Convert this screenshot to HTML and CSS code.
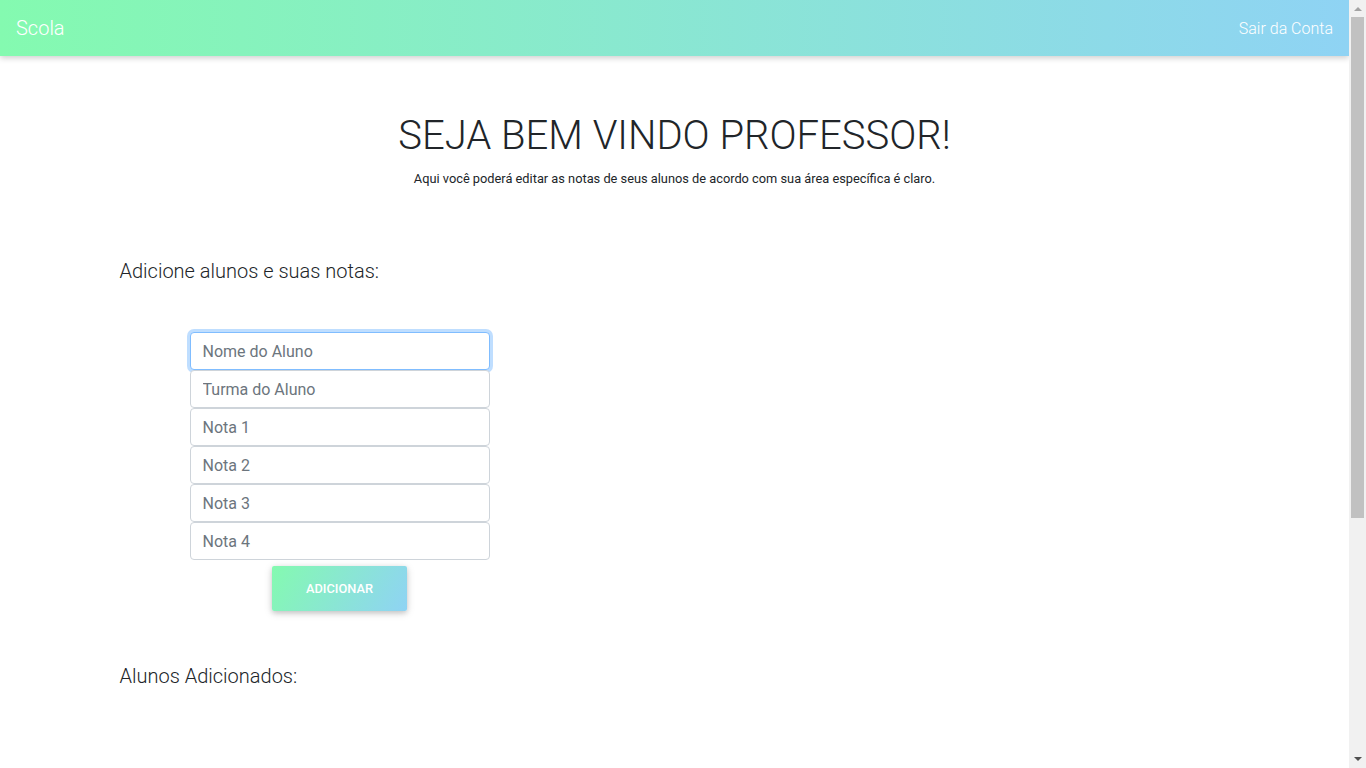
FILE: index.html
```html
<!DOCTYPE html>
<html lang="pt-BR">
<head>
<meta charset="utf-8">
<title>Scola</title>
<link rel="stylesheet" href="styles.css">
</head>
<body>
<nav class="navbar">
  <span class="brand">Scola</span>
  <a class="logout" href="#">Sair da Conta</a>
</nav>
<main class="container">
  <header class="hero">
    <h1 class="hero-title">SEJA BEM VINDO PROFESSOR!</h1>
    <p class="hero-sub">Aqui você poderá editar as notas de seus alunos de acordo com sua área específica é claro.</p>
  </header>
  <section class="add">
    <h2 class="section-title">Adicione alunos e suas notas:</h2>
    <form class="form">
      <input class="field focused" type="text" placeholder="Nome do Aluno">
      <input class="field" type="text" placeholder="Turma do Aluno">
      <input class="field" type="text" placeholder="Nota 1">
      <input class="field" type="text" placeholder="Nota 2">
      <input class="field" type="text" placeholder="Nota 3">
      <input class="field" type="text" placeholder="Nota 4">
      <button class="btn" type="button">ADICIONAR</button>
    </form>
  </section>
  <section class="list">
    <h2 class="section-title">Alunos Adicionados:</h2>
  </section>
</main>
<div class="scrollbar" aria-hidden="true">
  <span class="sb-arrow sb-up"></span>
  <span class="sb-thumb"></span>
  <span class="sb-arrow sb-down"></span>
</div>
</body>
</html>
```

FILE: styles.css
```css
* { box-sizing: border-box; }
html, body { margin: 0; padding: 0; }
html { scrollbar-width: none; }
body {
  font-family: Roboto, "Liberation Sans", sans-serif;
  color: #212529;
  background: #fff;
  min-height: 1113px;
  padding-right: 17px;
}
.navbar {
  height: 56px;
  display: flex;
  align-items: center;
  justify-content: space-between;
  padding: 0 16px;
  background: linear-gradient(90deg, #84fab0 0%, #8fd3f4 100%);
  box-shadow: 0 2px 6px rgba(0,0,0,0.2);
}
.brand {
  color: #fff;
  font-size: 20px;
  font-weight: 300;
}
.logout {
  color: #fff;
  font-size: 16px;
  font-weight: 300;
  text-decoration: none;
}
.container {
  max-width: 1140px;
  margin: 0 auto;
  padding: 0 15px;
}
.hero {
  text-align: center;
  padding-top: 56px;
}
.hero-title {
  margin: 0;
  font-size: 40px;
  font-weight: 300;
  line-height: 1.2;
}
.hero-sub {
  margin: 9px 0 0;
  font-size: 12.8px;
  line-height: 1.5;
}
.add { padding-top: 71px; }
.section-title {
  margin: 0;
  font-size: 20px;
  font-weight: 300;
  line-height: 1.2;
}
.form {
  width: 300px;
  margin: 49px 0 0 70px;
  display: flex;
  flex-direction: column;
  align-items: center;
}
.field {
  width: 100%;
  height: 38px;
  padding: 6px 12px;
  font-family: inherit;
  font-size: 16px;
  color: #495057;
  border: 1px solid #ced4da;
  border-radius: 4px;
  background: #fff;
  outline: none;
}
.field::placeholder { color: #6c757d; }
.field.focused {
  border-color: #80bdff;
  box-shadow: 0 0 0 3px rgba(0,123,255,0.25);
}
.btn {
  margin-top: 6px;
  width: 135px;
  height: 45px;
  border: 0;
  border-radius: 2px;
  background: linear-gradient(120deg, #84fab0 0%, #8fd3f4 100%);
  color: #fff;
  font-family: inherit;
  font-size: 12.8px;
  font-weight: 500;
  box-shadow: 0 2px 5px rgba(0,0,0,0.16), 0 2px 10px rgba(0,0,0,0.12);
}
.list { padding-top: 53px; }

.scrollbar {
  position: fixed;
  top: 0;
  right: 0;
  width: 17px;
  height: 100vh;
  background: #f1f1f1;
  display: flex;
  flex-direction: column;
  align-items: center;
}
.sb-arrow {
  width: 0;
  height: 0;
  border-left: 4px solid transparent;
  border-right: 4px solid transparent;
}
.sb-up {
  margin-top: 7px;
  border-bottom: 4px solid #a3a3a3;
}
.sb-thumb {
  width: 13px;
  height: 501px;
  margin-top: 6px;
  background: #c1c1c1;
}
.sb-down {
  margin-top: auto;
  margin-bottom: 7px;
  border-top: 4px solid #505050;
}
```
